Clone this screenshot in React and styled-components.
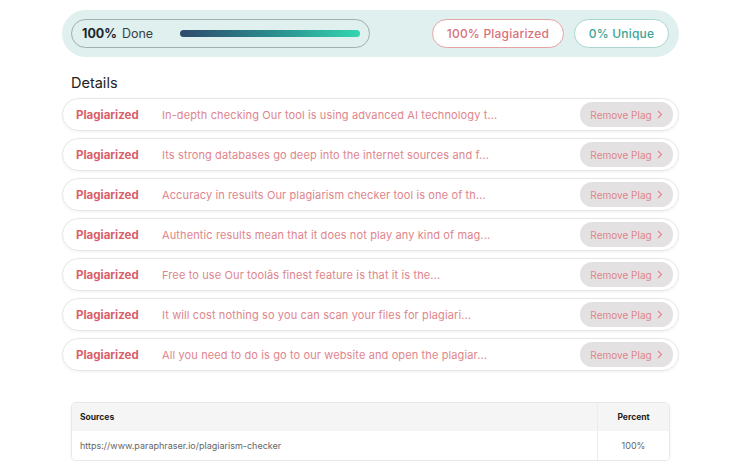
import React from "react";
import styled, { createGlobalStyle } from "styled-components";

const Global = createGlobalStyle`
  html, body { margin: 0; padding: 0; background: #fff; }
  body { font-family: Inter, "Open Sans", sans-serif; }
  * { box-sizing: border-box; }
`;

const Page = styled.div`
  width: 617px;
  margin: 10px 0 0 62px;
  display: flex;
  flex-direction: column;
`;

const TopBar = styled.div`
  height: 47px;
  background: #dff0ee;
  border-radius: 24px;
  padding: 9px 10px 9px 9px;
  display: flex;
  align-items: center;
  gap: 10px;
`;

const DonePill = styled.div`
  width: 299px;
  height: 29px;
  border: 1px solid #a3adad;
  border-radius: 15px;
  display: flex;
  align-items: center;
  padding: 0 9px 0 10px;
  font-size: 12.5px;
  color: #3a3f44;
`;

const Strong = styled.span`
  font-weight: 700;
  color: #20262c;
  margin-right: 5px;
`;

const Track = styled.div`
  margin-left: auto;
  width: 180px;
  height: 7px;
  border-radius: 4px;
  background: linear-gradient(90deg, #2f4a6c 0%, #2a8a8c 50%, #33d6b0 100%);
`;

const Spacer = styled.div`
  flex: 1;
`;

const StatPill = styled.div`
  height: 29px;
  width: ${(p) => p.$w}px;
  border: 1px solid ${(p) => p.$border};
  color: ${(p) => p.$color};
  background: #fff;
  border-radius: 15px;
  display: flex;
  align-items: center;
  justify-content: center;
  font-size: 12px;
  font-weight: 500;
  letter-spacing: 0.2px;
`;

const Title = styled.div`
  margin: 17px 0 0 9px;
  height: 22px;
  font-size: 14.5px;
  color: #222;
`;

const List = styled.div`
  display: flex;
  flex-direction: column;
  gap: 7px;
  margin-top: 2px;
`;

const Row = styled.div`
  height: 33px;
  border: 1px solid #e6e6e6;
  border-radius: 17px;
  box-shadow: 0 1px 3px rgba(0, 0, 0, 0.06);
  display: flex;
  align-items: center;
  padding: 0 5px 0 13px;
`;

const Label = styled.span`
  width: 86px;
  font-size: 11.5px;
  font-weight: 700;
  color: #d8606a;
`;

const Text = styled.span`
  flex: 1;
  font-size: 11px;
  color: #e0858c;
  white-space: nowrap;
  letter-spacing: 0.12px;
`;

const RemoveBtn = styled.button`
  width: 93px;
  height: 25px;
  border: none;
  border-radius: 12px;
  background: #e3e1e1;
  color: #e0858c;
  font-family: inherit;
  font-size: 10px;
  display: flex;
  align-items: center;
  justify-content: center;
  gap: 5px;
  padding: 0;
`;

const Table = styled.div`
  margin: 31px 9px 0 9px;
  border: 1px solid #e8e8e8;
  border-radius: 5px;
  box-shadow: 0 1px 3px rgba(0, 0, 0, 0.06);
  overflow: hidden;
  display: grid;
  grid-template-columns: 1fr 72px;
`;

const Cell = styled.div`
  height: ${(p) => (p.$head ? 28 : 29)}px;
  background: ${(p) => (p.$head ? "#f5f5f5" : "#fff")};
  display: flex;
  align-items: center;
  justify-content: ${(p) => (p.$center ? "center" : "flex-start")};
  padding-left: ${(p) => (p.$center ? 0 : 8)}px;
  border-left: ${(p) => (p.$center ? "1px solid #ececec" : "none")};
  font-size: ${(p) => (p.$head ? 8.5 : 9)}px;
  font-weight: ${(p) => (p.$head ? 700 : 400)};
  color: ${(p) => (p.$head ? "#222" : "#666")};
`;

const rows = [
  "In-depth checking Our tool is using advanced AI technology t...",
  "Its strong databases go deep into the internet sources and f...",
  "Accuracy in results Our plagiarism checker tool is one of th...",
  "Authentic results mean that it does not play any kind of mag...",
  "Free to use Our toolâs finest feature is that it is the...",
  "It will cost nothing so you can scan your files for plagiari...",
  "All you need to do is go to our website and open the plagiar...",
];

const Chevron = () => (
  <svg width="6" height="9" viewBox="0 0 6 9" fill="none">
    <path d="M1 1l3.5 3.5L1 8" stroke="#e0858c" strokeWidth="1.1" />
  </svg>
);

export default function App() {
  return (
    <>
      <Global />
      <Page>
        <TopBar>
          <DonePill>
            <Strong>100%</Strong> Done
            <Track />
          </DonePill>
          <Spacer />
          <StatPill $w={132} $border="#e5a3a6" $color="#d9707a">
            100% Plagiarized
          </StatPill>
          <StatPill $w={95} $border="#a9d6cf" $color="#3aa394">
            0% Unique
          </StatPill>
        </TopBar>
        <Title>Details</Title>
        <List>
          {rows.map((t, i) => (
            <Row key={i}>
              <Label>Plagiarized</Label>
              <Text>{t}</Text>
              <RemoveBtn>
                Remove Plag <Chevron />
              </RemoveBtn>
            </Row>
          ))}
        </List>
        <Table>
          <Cell $head>Sources</Cell>
          <Cell $head $center>Percent</Cell>
          <Cell>https://www.paraphraser.io/plagiarism-checker</Cell>
          <Cell $center>100%</Cell>
        </Table>
      </Page>
    </>
  );
}
